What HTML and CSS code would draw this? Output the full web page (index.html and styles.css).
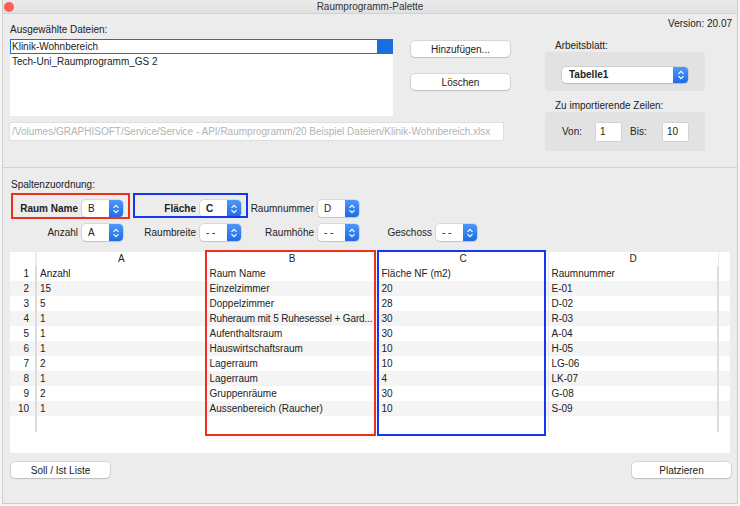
FILE: index.html
```html
<!DOCTYPE html>
<html lang="de">
<head>
<meta charset="utf-8">
<title>Raumprogramm-Palette</title>
<link rel="stylesheet" href="styles.css">
</head>
<body>
<div class="window">
  <div class="titlebar"><span class="close"></span><span class="title">Raumprogramm-Palette</span></div>

  <div class="top">
    <div class="files">
      <div class="lbl">Ausgewählte Dateien:</div>
      <div class="filelist">
        <div class="file selrow"><span class="edit">Klinik-Wohnbereich</span></div>
        <div class="file">Tech-Uni_Raumprogramm_GS 2</div>
      </div>
      <div class="btns">
        <button class="btn">Hinzufügen...</button>
        <button class="btn">Löschen</button>
      </div>
      <div class="path">/Volumes/GRAPHISOFT/Service/Service - API/Raumprogramm/20 Beispiel Dateien/Klinik-Wohnbereich.xlsx</div>
    </div>
    <div class="side">
      <div class="version">Version: 20.07</div>
      <div class="lbl side-lbl">Arbeitsblatt:</div>
      <div class="box box-sheet">
        <span class="sel sel-wide"><span class="val bold">Tabelle1</span><span class="step"><svg width="8" height="12" viewBox="0 0 8 12"><path d="M1.5 4.8 L4 2.3 L6.5 4.8 M1.5 7.2 L4 9.7 L6.5 7.2" fill="none" stroke="#fff" stroke-width="1.2"/></svg></span></span>
      </div>
      <div class="lbl side-lbl2">Zu importierende Zeilen:</div>
      <div class="box box-rows">
        <span class="rl">Von:</span><span class="num">1</span>
        <span class="rl rl2">Bis:</span><span class="num">10</span>
      </div>
    </div>
  </div>

  <div class="mapping">
    <div class="lbl">Spaltenzuordnung:</div>
    <div class="mapgrid">
      <div class="cell"><span class="bold">Raum Name</span><span class="sel"><span class="val">B</span><span class="step"><svg width="8" height="12" viewBox="0 0 8 12"><path d="M1.5 4.8 L4 2.3 L6.5 4.8 M1.5 7.2 L4 9.7 L6.5 7.2" fill="none" stroke="#fff" stroke-width="1.2"/></svg></span></span></div>
      <div class="cell"><span class="bold">Fläche</span><span class="sel"><span class="val bold">C</span><span class="step"><svg width="8" height="12" viewBox="0 0 8 12"><path d="M1.5 4.8 L4 2.3 L6.5 4.8 M1.5 7.2 L4 9.7 L6.5 7.2" fill="none" stroke="#fff" stroke-width="1.2"/></svg></span></span></div>
      <div class="cell"><span>Raumnummer</span><span class="sel"><span class="val">D</span><span class="step"><svg width="8" height="12" viewBox="0 0 8 12"><path d="M1.5 4.8 L4 2.3 L6.5 4.8 M1.5 7.2 L4 9.7 L6.5 7.2" fill="none" stroke="#fff" stroke-width="1.2"/></svg></span></span></div>
      <div class="cell"></div>
      <div class="cell"><span>Anzahl</span><span class="sel"><span class="val">A</span><span class="step"><svg width="8" height="12" viewBox="0 0 8 12"><path d="M1.5 4.8 L4 2.3 L6.5 4.8 M1.5 7.2 L4 9.7 L6.5 7.2" fill="none" stroke="#fff" stroke-width="1.2"/></svg></span></span></div>
      <div class="cell"><span>Raumbreite</span><span class="sel"><span class="val">- -</span><span class="step"><svg width="8" height="12" viewBox="0 0 8 12"><path d="M1.5 4.8 L4 2.3 L6.5 4.8 M1.5 7.2 L4 9.7 L6.5 7.2" fill="none" stroke="#fff" stroke-width="1.2"/></svg></span></span></div>
      <div class="cell"><span>Raumhöhe</span><span class="sel"><span class="val">- -</span><span class="step"><svg width="8" height="12" viewBox="0 0 8 12"><path d="M1.5 4.8 L4 2.3 L6.5 4.8 M1.5 7.2 L4 9.7 L6.5 7.2" fill="none" stroke="#fff" stroke-width="1.2"/></svg></span></span></div>
      <div class="cell"><span>Geschoss</span><span class="sel"><span class="val">- -</span><span class="step"><svg width="8" height="12" viewBox="0 0 8 12"><path d="M1.5 4.8 L4 2.3 L6.5 4.8 M1.5 7.2 L4 9.7 L6.5 7.2" fill="none" stroke="#fff" stroke-width="1.2"/></svg></span></span></div>
    </div>
    <div class="mark mark-red"></div>
    <div class="mark mark-blue"></div>
  </div>

  <div class="sheet">
    <table class="grid">
      <colgroup><col class="c-n"><col class="c-a"><col class="c-b"><col class="c-c"><col class="c-d"><col class="c-f"></colgroup>
      <thead><tr><th></th><th>A</th><th>B</th><th>C</th><th>D</th><th></th></tr></thead>
      <tbody>
        <tr><td class="n">1</td><td>Anzahl</td><td>Raum Name</td><td>Fläche NF (m2)</td><td>Raumnummer</td><td></td></tr>
        <tr><td class="n">2</td><td>15</td><td>Einzelzimmer</td><td>20</td><td>E-01</td><td></td></tr>
        <tr><td class="n">3</td><td>5</td><td>Doppelzimmer</td><td>28</td><td>D-02</td><td></td></tr>
        <tr><td class="n">4</td><td>1</td><td class="tight">Ruheraum mit 5 Ruhesessel + Gard...</td><td>30</td><td>R-03</td><td></td></tr>
        <tr><td class="n">5</td><td>1</td><td>Aufenthaltsraum</td><td>30</td><td>A-04</td><td></td></tr>
        <tr><td class="n">6</td><td>1</td><td>Hauswirtschaftsraum</td><td>10</td><td>H-05</td><td></td></tr>
        <tr><td class="n">7</td><td>2</td><td>Lagerraum</td><td>10</td><td>LG-06</td><td></td></tr>
        <tr><td class="n">8</td><td>1</td><td>Lagerraum</td><td>4</td><td>LK-07</td><td></td></tr>
        <tr><td class="n">9</td><td>2</td><td>Gruppenräume</td><td>30</td><td>G-08</td><td></td></tr>
        <tr><td class="n">10</td><td>1</td><td>Aussenbereich (Raucher)</td><td>10</td><td>S-09</td><td></td></tr>
        <tr class="filler"><td class="n"></td><td></td><td></td><td></td><td></td><td></td></tr>
      </tbody>
    </table>
    <div class="mark colmark-red"></div>
    <div class="mark colmark-blue"></div>
  </div>

  <div class="footer">
    <button class="btn">Soll / Ist Liste</button>
    <button class="btn">Platzieren</button>
  </div>
</div>
</body>
</html>
```

FILE: styles.css
```css
* { box-sizing: border-box; }
html, body { margin: 0; padding: 0; }
body {
  background: #f4f4f4;
  font-family: "Liberation Sans", Arial, sans-serif;
  font-size: 10px;
  color: #222;
  width: 740px;
  height: 506px;
  overflow: hidden;
}
.window {
  margin-left: 2px;
  width: 736px;
  height: 504px;
  background: #ececec;
  border: 1px solid #cdcdcd;
  border-top: none;
  display: flex;
  flex-direction: column;
}
.titlebar {
  height: 14px;
  background: linear-gradient(#ebebeb, #e0e0e0);
  border-bottom: 1px solid #d2d2d2;
  display: flex;
  align-items: center;
}
.close {
  width: 10px; height: 10px;
  border-radius: 50%;
  background: #fc5f57;
  margin-left: 1px;
}
.title {
  flex: 1;
  text-align: center;
  font-size: 10px;
  color: #333;
  margin-right: 11px;
  line-height: 13px;
}
.lbl { line-height: 12px; height: 12px; white-space: nowrap; }
.bold { font-weight: bold; }

/* top section */
.top {
  height: 154px;
  border-bottom: 1px solid #d3d3d3;
  display: flex;
  padding-left: 7px;
}
.files {
  display: grid;
  grid-template-columns: 383px 17px 100px;
  grid-template-rows: 12px 77px 17px;
  padding-top: 10px;
}
.files > .lbl { grid-column: 1 / 4; grid-row: 1; }
.filelist {
  grid-column: 1; grid-row: 2;
  margin-top: 3px;
  height: 77px;
  background: #fff;
}
.file { height: 15px; line-height: 15px; padding-left: 2px; white-space: nowrap; }
.file.selrow {
  background: #1c6de0;
  padding: 1px 0 1px 1px;
  display: flex;
}
.edit {
  display: block;
  width: 366px;
  height: 13px;
  line-height: 13px;
  background: #fff;
  padding-left: 1px;
}
.btns {
  grid-column: 3; grid-row: 2;
  display: flex;
  flex-direction: column;
  gap: 17px;
  padding-top: 5px;
  padding-left: 1px;
}
.btn {
  font-family: inherit;
  font-size: 10px;
  color: #222;
  background: #fff;
  border: none;
  border-radius: 4px;
  height: 16px;
  padding: 0;
  box-shadow: 0 0 0 0.6px rgba(0,0,0,0.18), 0 1px 1px rgba(0,0,0,0.12);
}
.btns .btn { width: 99px; }
.path {
  grid-column: 1 / 4; grid-row: 3;
  margin-top: 10px;
  width: 493px;
  height: 17px;
  line-height: 17px;
  background: #fff;
  box-shadow: 0 0 0 0.6px rgba(0,0,0,0.1);
  color: #b3b3b3;
  padding-left: 2px;
  white-space: nowrap;
  overflow: hidden;
}
.side {
  margin-left: 35px;
  width: 187px;
  display: flex;
  flex-direction: column;
}
.version { text-align: right; line-height: 12px; margin-top: 4px; }
.side-lbl { margin-top: 10px; padding-left: 10px; }
.side-lbl2 { margin-top: 9px; padding-left: 10px; }
.box {
  width: 160px;
  height: 39px;
  background: #e2e2e2;
  border-radius: 4px;
}
.box-sheet { padding: 15px 0 0 17px; }
.box-rows {
  display: flex;
  align-items: center;
  padding-left: 17px;
}
.rl { width: 34px; line-height: 18px; }
.rl2 { margin-left: 9px; width: 33px; }
.num {
  width: 25px; height: 18px; line-height: 18px;
  background: #fff;
  padding-left: 4px;
  box-shadow: 0 0 0 0.6px rgba(0,0,0,0.12);
}

/* select */
.sel {
  display: inline-flex;
  width: 41px;
  height: 17px;
  background: #fff;
  border-radius: 4px;
  box-shadow: 0 0 0 0.6px rgba(0,0,0,0.16), 0 1px 1px rgba(0,0,0,0.1);
  flex: none;
}
.sel-wide { width: 126px; height: 16px; }
.val { flex: 1; padding-left: 6px; line-height: 17px; white-space: nowrap; }
.sel-wide .val { padding-left: 7px; line-height: 16px; }
.step {
  width: 14px;
  background: linear-gradient(#4d98f8, #1c6de6);
  border-radius: 0 4px 4px 0;
  display: flex;
  align-items: center;
  justify-content: center;
}
.sel-wide .step { width: 15px; }

/* mapping */
.mapping {
  position: relative;
  padding-left: 8px;
  padding-top: 11px;
}
.mapgrid {
  margin-left: -6px;
  margin-top: 9px;
  display: grid;
  grid-template-columns: repeat(4, 118px);
  grid-auto-rows: 17px;
  row-gap: 7px;
}
.cell {
  display: flex;
  justify-content: flex-end;
  align-items: center;
  gap: 4px;
  white-space: nowrap;
}
.cell > span:first-child { line-height: 12px; }
.mark { position: absolute; pointer-events: none; }
.mark-red { left: 8px; top: 25px; width: 119px; height: 26px; border: 2px solid #f0301c; }
.mark-blue { left: 130px; top: 25px; width: 115px; height: 25px; border: 2px solid #1736f2; }

/* sheet */
.sheet {
  position: relative;
  margin: 11px 0 0 7px;
  width: 720px;
  height: 201px;
  background: #fff;
}
.grid {
  border-collapse: collapse;
  table-layout: fixed;
  width: 720px;
}
.c-n { width: 26px; } .c-a { width: 170px; } .c-b { width: 172px; }
.c-c { width: 170px; } .c-d { width: 170px; } .c-f { width: 12px; }
.grid th {
  height: 14px;
  padding: 0;
  font-weight: normal;
  text-align: center;
  line-height: 14px;
  border-right: 1px solid #ececec;
}
.grid td {
  height: 15px;
  padding: 0 0 0 3px;
  line-height: 15px;
  white-space: nowrap;
  overflow: hidden;
  border-right: 1px solid #e6e6e6;
}
.grid td.tight { letter-spacing: -0.15px; }
.grid td.n { text-align: right; padding: 0 6px 0 0; border-right: 2px solid #dcdcdc; }
.grid th:first-child { border-right: 2px solid #ececec; }
.grid td:nth-child(5) { border-right: 2px solid #dedede; }
.grid td:last-child, .grid th:last-child { border-right: none; }
.grid tbody tr:nth-child(even) { background: #f4f4f4; }
.grid tr.filler td { height: 16px; background: #fff; }
.colmark-red { left: 195px; top: -2px; width: 171px; height: 186px; border: 2px solid #f0301c; }
.colmark-blue { left: 367px; top: -2px; width: 169px; height: 186px; border: 2px solid #1736f2; }

/* footer */
.footer {
  display: flex;
  justify-content: space-between;
  margin-top: 9px;
  padding: 0 6px 0 8px;
}
.footer .btn { width: 99px; }
```
